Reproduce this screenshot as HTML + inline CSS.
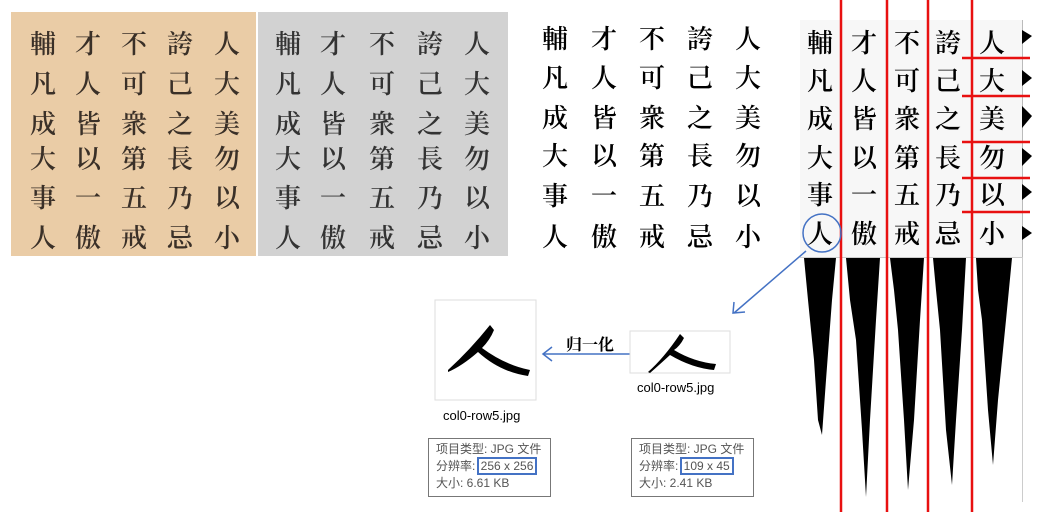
<!DOCTYPE html>
<html><head><meta charset="utf-8"><style>
body{margin:0;width:1059px;height:512px;background:#fff;position:relative;overflow:hidden;font-family:"Liberation Sans","Noto Sans CJK SC",sans-serif}
.p{position:absolute}
.c{position:absolute;font-family:"Noto Serif CJK SC","WenQuanYi Zen Hei",serif;font-size:26px;line-height:29px;width:34px;text-align:center;color:#222;font-weight:600}
.box{position:absolute;border:1px solid #777;font-size:12px;color:#555;line-height:17px;padding:2px 7px;box-sizing:border-box}
.hl{border:2px solid #4472c4;padding:0 2px;margin-left:-2px}
</style></head><body>
<div class="p" style="left:11px;top:12px;width:245px;height:244px;background:#eaccA6"></div>
<div class="p" style="left:258px;top:12px;width:250px;height:244px;background:#d2d2d2"></div>
<div class="p" style="left:800px;top:20px;width:222px;height:237px;background:#f7f7f7;border-right:1px solid #bbb;border-bottom:1px solid #ccc"></div>
<div class="p" style="left:1022px;top:257px;width:1px;height:245px;background:#ccc"></div>
<div id="g"></div>
<svg class="p" style="left:0;top:0" width="1059" height="512">
<g fill="#000">
<polygon points="804,258 836,258 832,300 826,380 822,435 818,420 814,360 808,300"/>
<polygon points="846,258 880,258 876,320 870,420 866,497 862,430 856,340 850,300"/>
<polygon points="890,258 924,258 920,320 914,420 908,490 904,420 898,330 894,290"/>
<polygon points="933,258 966,258 962,330 956,420 952,485 946,430 940,330 936,290"/>
<polygon points="976,258 1012,258 1006,320 998,400 993,465 988,410 982,320 978,290"/>
<polygon points="1022,30 1032,36 1022,44"/><polygon points="1022,70 1032,78 1022,86"/><polygon points="1022,106 1032,116 1022,128"/><polygon points="1022,148 1032,156 1022,166"/><polygon points="1022,184 1032,192 1022,200"/><polygon points="1022,226 1032,233 1022,240"/>
</g>
<g stroke="#e81010" stroke-width="2.5">
<line x1="841" y1="0" x2="841" y2="512"/><line x1="887" y1="0" x2="887" y2="512"/><line x1="928" y1="0" x2="928" y2="512"/><line x1="972" y1="0" x2="972" y2="512"/>
<line x1="962" y1="58" x2="1030" y2="58"/><line x1="962" y1="96" x2="1030" y2="96"/><line x1="962" y1="142" x2="1030" y2="142"/><line x1="962" y1="178" x2="1030" y2="178"/><line x1="962" y1="212" x2="1030" y2="212"/>
</g>
<g stroke="#4472c4" stroke-width="1.5" fill="none">
<circle cx="822" cy="233" r="19"/>
<line x1="806" y1="251" x2="734" y2="313"/><polyline points="734,302 733,313 745,312"/>
<line x1="652" y1="354" x2="543" y2="354"/><polyline points="552,347 543,354 552,361"/>
</g>
<rect x="435" y="300" width="101" height="100" fill="#fff" stroke="#ddd"/>
<rect x="630" y="331" width="100" height="42" fill="#fff" stroke="#ddd"/>
<path d="M448,370 Q470,350 490,325 L494,330 Q490,340 482,348 Q505,365 530,370 L528,376 Q500,372 478,352 Q462,366 448,372Z" fill="#000"/>
<path d="M648,372 Q664,358 680,334 L684,338 Q680,346 674,350 Q694,362 716,364 L714,370 Q692,368 670,355 Q658,366 650,373Z" fill="#000"/>
</svg>
<div class="p" style="left:566px;top:332px;font-family:'Noto Serif CJK SC',serif;font-size:16px;font-weight:bold">归一化</div>
<div class="p" style="left:443px;top:408px;font-size:13px">col0-row5.jpg</div>
<div class="p" style="left:637px;top:380px;font-size:13px">col0-row5.jpg</div>
<div class="box" style="left:428px;top:438px;width:123px;height:59px">项目类型: JPG 文件<br>分辨率: <span class="hl">256 x 256</span><br>大小: 6.61 KB</div>
<div class="box" style="left:631px;top:438px;width:123px;height:59px">项目类型: JPG 文件<br>分辨率: <span class="hl">109 x 45</span><br>大小: 2.41 KB</div>
<script>
var cols=["輔凡成大事人","才人皆以一傲","不可衆第五戒","誇己之長乃忌","人大美勿以小"];
var sets=[{x:[43,88,134,180,227],y:[43,83,123,158,197,237],c:"#3a3028"},{x:[288,333,382,430,477],y:[43,83,123,158,197,237],c:"#333"},{x:[555,604,652,700,748],y:[38,77,117,155,195,236],c:"#000"},{x:[820,864,907,948,992],y:[42,80,118,157,194,233],c:"#000"}];
var h="";sets.forEach(function(s){for(var i=0;i<5;i++)for(var j=0;j<6;j++)h+='<div class="c" style="left:'+(s.x[i]-17)+'px;top:'+(s.y[j]-15)+'px;color:'+s.c+'">'+cols[i][j]+'</div>';});
document.getElementById("g").innerHTML=h;
</script>
</body></html>
